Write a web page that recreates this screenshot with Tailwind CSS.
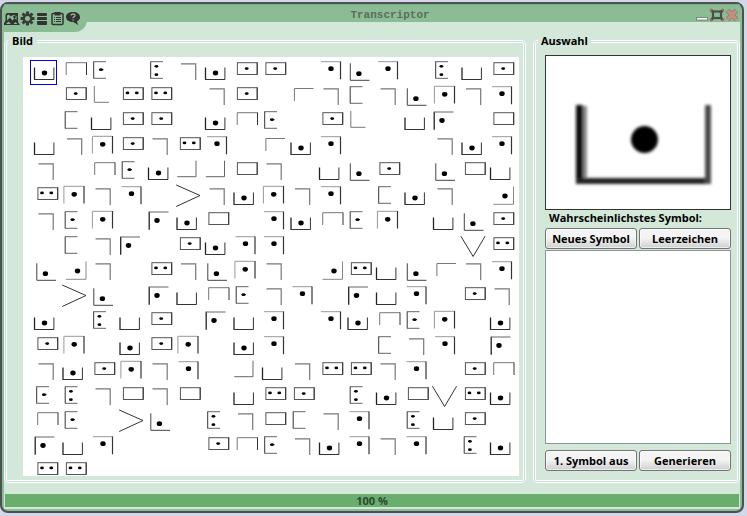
<!DOCTYPE html>
<html lang="de">
<head>
<meta charset="utf-8">
<title>Transcriptor</title>
<script src="https://cdn.jsdelivr.net/npm/@tailwindcss/browser@4"></script>
</head>
<body class="h-screen overflow-hidden bg-[#d3d8e8] pt-[2px] pr-[3px] pb-[3px] font-['Open_Sans','Noto_Sans',sans-serif] text-[11px] leading-[14px] font-bold text-black">
<div class="flex h-full flex-col rounded-lg border-2 border-[#4d4f50] bg-[#8bbd95] px-[2px] pb-[2px]">

  <header class="relative flex h-[18px] shrink-0 items-center justify-center border-t border-[#79ad84] pt-[2px] pl-9">
    <h1 class="font-['Liberation_Mono',monospace] text-[11px] leading-[14px] text-[#5d6b60]">Transcriptor</h1>
    <nav class="absolute top-0 left-0 flex h-[27px] w-[83px] items-center rounded-br-xl bg-[#8bbd95]" aria-label="Werkzeuge">
      <button type="button" aria-label="Bild laden" class="h-4 w-4">
        <svg viewBox="0 0 16 16" class="h-4 w-4"><path d="M1.500 3.500 3 2h11v9l2 3H0V12l1.500-2z" fill="#333"/><path d="M3 9.500V4.500L4.500 3.500 7 5.500 9 4l3.500 1v4L10.500 7 8.500 9.500 6 6.500z" fill="#8bbd95"/><circle cx="10.500" cy="6" r="1.300" fill="#333"/><path d="m2 13 2.500-2.500L7 13zM9.500 13l2-2 2 2z" fill="#8bbd95"/></svg>
      </button>
      <button type="button" aria-label="Einstellungen" class="h-4 w-[15px]">
        <svg viewBox="0 0 15 16" class="h-4 w-[15px]"><g transform="translate(7.500 7.500)" fill="#3a3c3a"><g id="teeth"><rect x="-1.500" y="-7" width="3" height="14"/><rect x="-7" y="-1.500" width="14" height="3"/></g><use href="#teeth" transform="rotate(45)"/><circle r="5"/><circle r="2.500" fill="#8bbd95"/></g></svg>
      </button>
      <button type="button" aria-label="Liste" class="h-4 w-[15px]">
        <svg viewBox="0 0 15 16" class="h-4 w-[15px]" fill="#333"><rect x="2" y="2" width="10" height="3" rx="1"/><rect x="2" y="6" width="10" height="3" rx="1"/><rect x="2" y="10" width="10" height="4" rx="1"/></svg>
      </button>
      <button type="button" aria-label="Protokoll" class="h-4 w-[15px]">
        <svg viewBox="0 0 15 16" class="h-4 w-[15px]"><rect x="2" y="2.500" width="11" height="11" rx="1" fill="none" stroke="#333" stroke-width="1.500"/><path d="M4.500 1h6v3.500h-6z" fill="#333"/><path d="M4 6.500h1m1 0h5M4 8.500h1m1 0h5M4 10.500h1m1 0h5" stroke="#333"/></svg>
      </button>
      <button type="button" aria-label="Hilfe" class="h-4 w-4">
        <svg viewBox="0 0 16 16" class="h-4 w-4"><path d="M8 1c4 0 7 2 7 5 0 2-1 3.500-3 4.200L13 14 8.500 11C4 11 1 9 1 6s3-5 7-5z" fill="#333"/><path d="M6 4.500C6.300 2.500 10 2.500 10 4.500 10 6 8 5.800 8 7.200M8 8.500v1.200" fill="none" stroke="#8bbd95" stroke-width="1.300"/></svg>
      </button>
    </nav>
    <div class="absolute top-[3px] right-[1px] flex items-center">
      <button type="button" aria-label="Minimieren" class="h-4 w-[14px]">
        <svg viewBox="0 0 14 16" class="h-4 w-[14px]"><rect x="1.500" y="9.500" width="11" height="2.500" fill="#fff" stroke="#66756a" stroke-width=".8"/></svg>
      </button>
      <button type="button" aria-label="Maximieren" class="h-4 w-4">
        <svg viewBox="0 0 16 16" class="h-4 w-4"><path d="m1.500 1.500 3 3m10-3-3 3m-10 8 3-3m10 3-3-3" stroke="#4a4f4b" stroke-width="2.500"/><rect x="4" y="3.500" width="8" height="6.500" fill="#8bbd95" stroke="#4a4f4b" stroke-width="2.200"/><path d="M1 1h2v2H1zM13 1h2v2h-2zM1 11h2v2H1zM13 11h2v2h-2z" fill="#c4575c"/></svg>
      </button>
      <button type="button" aria-label="Schließen" class="h-4 w-[14px]">
        <svg viewBox="0 0 14 16" class="h-4 w-[14px]"><path d="m2.500 2.500 9 9m0-9-9 9" stroke="#80806e" stroke-width="5"/><path d="m2.800 2.800 8.400 8.400m0-8.400-8.400 8.400" stroke="#c68d7d" stroke-width="3.500"/></svg>
      </button>
    </div>
  </header>

  <div class="flex min-h-0 flex-1 flex-col bg-[#d3e8d8]">
    <main class="flex min-h-0 flex-1 gap-[7px] pt-3">
      <fieldset class="min-w-0 flex-1 rounded border-3 border-double border-white pr-1 pl-4 [background:linear-gradient(#d3e8d8,#d3e8d8)_padding-box,#ccdce3_border-box]">
        <legend class="-ml-[15px] bg-[#d3e8d8] px-1">Bild</legend>
        <svg id="scan" viewBox="23 57 496 419" class="mt-[9px] block h-auto w-full bg-white" role="img" aria-label="Geheimtext" fill="none" stroke="#333" stroke-width="1">
          <defs>
            <g id="big"><ellipse rx="2.700" ry="2.400" fill="#000" stroke="none"/></g>
            <g id="small"><ellipse rx="1.900" ry="1.400" fill="#000" stroke="none"/></g>
            <g id="U"><path d="M34.500 67.500V79.500" stroke="#222" stroke-width="1.300"/><path d="M34 79.500H54M53.900 67.500V79.500"/></g>
            <g id="UD"><use href="#U"/><use href="#big" x="44.500" y="73"/></g>
            <g id="N"><path d="M37.700 75V62.700H58" stroke="#777"/><path d="M58 62.500V75"/></g>
            <g id="C"><path d="M36.700 61.500V78.500"/><path d="M36.500 61.700H49M36.500 78.300H49" stroke="#666"/></g>
            <g id="ED"><use href="#C"/><use href="#small" x="44" y="69.700"/><path d="M42 69.700h4.500" stroke="#000"/></g>
            <g id="E2"><use href="#C"/><use href="#small" x="42.400" y="66.300"/><use href="#small" x="42.400" y="74.700"/></g>
            <g id="7"><path d="M38.500 63.900H53.200V80" stroke="#777" stroke-width="1.200"/></g>
            <g id="B"><rect x="37.900" y="62.700" width="19.800" height="11.800" stroke="#555"/><path d="M57.700 62.500v12"/></g>
            <g id="BD"><use href="#B"/><use href="#small" x="47.200" y="68.600"/></g>
            <g id="BB"><use href="#B"/><use href="#small" x="42" y="67.900"/><use href="#small" x="51.300" y="67.900"/></g>
            <g id="L"><path d="M37.300 61V77.300H52" stroke="#777"/></g>
            <g id="LD"><path d="M36.800 63.300V80.300H56" stroke="#444"/><use href="#big" x="45.400" y="73.700"/></g>
            <g id="7D"><path d="M36 61.700H55.500" stroke="#999"/><path d="M55.500 61.500V79.300" stroke-width="1.200"/><use href="#big" x="46" y="68.700"/></g>
            <g id="M"><path d="M35.400 78.500V61.300H55" stroke="#999"/><path d="M55.500 61V78.500" stroke-width="1.200"/><use href="#big" x="45.700" y="69.300"/></g>
            <g id="F"><path d="M37.900 76V63.500H57" stroke="#777"/></g>
            <g id="FD"><path d="M35.200 61.700V79.700" stroke="#222" stroke-width="1.300"/><path d="M35 62H54.500" stroke="#666"/><use href="#big" x="43" y="70.500"/></g>
            <g id="J"><path d="M34.800 76.700H53.500V60.700" stroke="#666"/></g>
            <g id="JD"><path d="M37.500 79.300H57.500V61.500" stroke="#888"/><use href="#big" x="49" y="71"/></g>
            <g id="GT"><path d="M33.700 60 57.500 70.500 33.700 81.500"/></g>
            <g id="V"><path d="M33.400 61.200 45.600 81.500 57.600 61.200"/></g>
          </defs>
        </svg>
      </fieldset>

      <fieldset class="w-[207px] shrink-0 rounded border-3 border-double border-white pr-[6px] pl-[9px] [background:linear-gradient(#d3e8d8,#d3e8d8)_padding-box,#ccdce3_border-box]">
        <legend class="-ml-[7px] bg-[#d3e8d8] px-[3px]">Auswahl</legend>
        <div class="flex flex-col">
          <svg viewBox="0 0 184 153" class="mt-[7px] block h-auto w-full border border-[#333] bg-white" role="img" aria-label="Ausgewähltes Symbol">
            <defs><filter id="soft" x="-20%" y="-20%" width="140%" height="140%"><feGaussianBlur stdDeviation="1.600"/></filter></defs>
            <g filter="url(#soft)">
              <rect x="35" y="50" width="6" height="78" fill="#888"/>
              <rect x="30" y="49" width="7" height="79" fill="#111"/>
              <rect x="31" y="122" width="134" height="6" fill="#222"/>
              <rect x="159" y="49" width="6" height="79" fill="#4a4a4a"/>
              <circle cx="98.500" cy="83.500" r="13.500" fill="#000"/>
            </g>
          </svg>
          <label for="symbols" class="mt-[1px] pl-1">Wahrscheinlichstes Symbol:</label>
          <div class="mt-[3px] grid grid-cols-2 gap-[2px]">
            <button type="button" class="h-[21px] rounded-[3px] border border-[#747474] bg-linear-to-b from-[#f4f4f4] from-45% to-[#cfcfcf] inset-ring inset-ring-white/60">Neues Symbol</button>
            <button type="button" class="h-[21px] rounded-[3px] border border-[#747474] bg-linear-to-b from-[#f4f4f4] from-45% to-[#cfcfcf] inset-ring inset-ring-white/60">Leerzeichen</button>
          </div>
          <textarea id="symbols" class="mt-[1px] block h-[194px] w-full resize-none border border-[#8c9499] bg-white p-1"></textarea>
          <div class="mt-[6px] grid grid-cols-2 gap-[2px]">
            <button type="button" class="h-[21px] rounded-[3px] border border-[#747474] bg-linear-to-b from-[#f4f4f4] from-45% to-[#cfcfcf] inset-ring inset-ring-white/60">1. Symbol aus</button>
            <button type="button" class="h-[21px] rounded-[3px] border border-[#747474] bg-linear-to-b from-[#f4f4f4] from-45% to-[#cfcfcf] inset-ring inset-ring-white/60">Generieren</button>
          </div>
        </div>
      </fieldset>
    </main>
    <footer class="px-[1px] pt-[11px] pb-[2px]">
      <div role="progressbar" aria-label="Fortschritt" aria-valuenow="100" class="flex h-[13px] items-center justify-center bg-[#69ae6c] text-[#2b4a30]">100 %</div>
    </footer>
  </div>
</div>
<script>
  // One line per row of the cipher text; "." is an empty cell.
  const rows = [
    "UD N ED . E2 7 UD BD BD . 7D LD 7D . E2 U BD",
    ". BD L BB BB . 7 BD . F 7 C 7 LD M 7 7D",
    ". C U BD BD . UD N ED . BD L . U FD . B",
    "U 7 M BD 7 BB 7D . F UD 7D . . . 7 UD 7D",
    "7 . N ED UD J J B 7 . U LD BD . LD B U",
    "BB M 7 7D . GT 7 UD M 7 7D . C UD 7 . JD",
    "7 ED M . FD UD B . 7D UD N ED M . U LD BD",
    ". C 7 FD . BD UD 7D 7D . . . . . . V BB",
    "LD JD 7 . BB 7 LD M 7 . JD BB U LD F 7 7D",
    ". GT LD . FD U N ED 7 7D . FD U 7D . BD 7",
    "UD . E2 U BD . FD U 7D . 7D UD N ED M . UD",
    "BD M . UD BD M . UD 7D . . . C 7 7D . FD",
    "7 UD BD M 7 7D . J U 7 BB BB 7 7D . BD N",
    "ED E2 7 B 7 B . U BB BD . E2 UD B V BB UD",
    "N ED . GT LD . E2 7 B C 7 7D . E2 U BD .",
    "FD U 7D . . . BD N ED 7 UD 7D 7 7D . E2 UD",
    "BB BB"
  ];
  const svg = document.getElementById("scan");
  const ns = "http://www.w3.org/2000/svg";
  rows.forEach((line, r) => line.split(" ").forEach((name, c) => {
    if (name === ".") return;
    const use = document.createElementNS(ns, "use");
    use.setAttribute("href", "#" + name);
    use.setAttribute("x", c * 28.5);
    use.setAttribute("y", r * 25);
    svg.append(use);
  }));
  const mark = document.createElementNS(ns, "rect");
  for (const [k, v] of Object.entries({ x: 30.5, y: 60.5, width: 26, height: 24, stroke: "#0000f0" })) mark.setAttribute(k, v);
  svg.append(mark);
</script>
</body>
</html>
